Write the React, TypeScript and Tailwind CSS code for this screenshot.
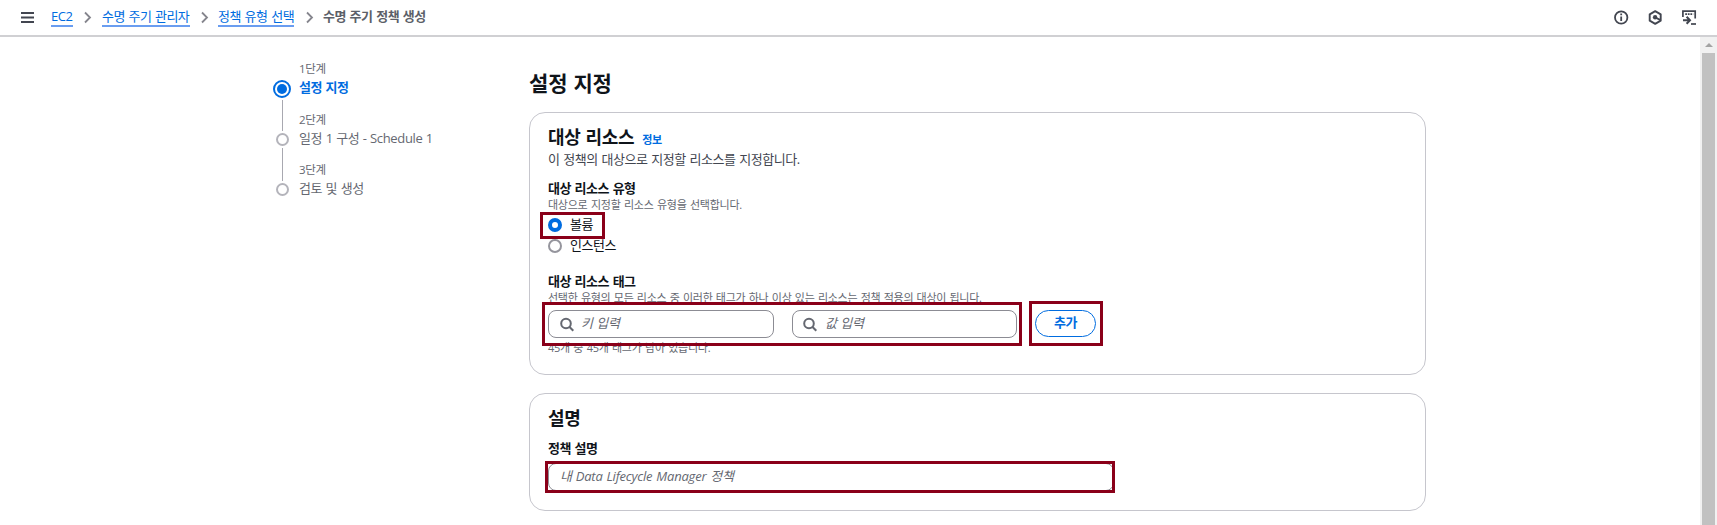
import type { ReactNode } from "react";

const Chevron = () => (
  <svg className="h-[13px] w-[9px] shrink-0" viewBox="0 0 9 13" fill="none" stroke="#85858d" strokeWidth="1.8">
    <path d="M1 1.5L6 6.5L1 11.5" />
  </svg>
);

const SearchIcon = () => (
  <svg className="h-[15px] w-[15px] shrink-0" viewBox="0 0 15 15" fill="none" stroke="#656871" strokeWidth="2">
    <circle cx="6" cy="6.5" r="4.8" />
    <path d="M9.3 9.8L13.3 13.8" />
  </svg>
);

const Crumb = ({ children, w }: { children: ReactNode; w: string }) => (
  <a className={`${w} h-[19px] shrink-0 border-b-2 border-[#6a9df0] text-[13px] leading-[16px] whitespace-nowrap text-[#006ce0]`}>
    {children}
  </a>
);

const Mark = ({ pos }: { pos: string }) => (
  <div className={`pointer-events-none absolute z-10 border-3 border-[#8a0019] ${pos}`} />
);

const Step = ({ n, label, last, style }: { n: string; label: string; last?: boolean; style: string }) => (
  <li className={`flex h-[50px] gap-[7px] ${style}`}>
    <div className="flex w-5 shrink-0 flex-col items-center">
      <div className="mt-[21px] h-[13px] w-[13px] shrink-0 rounded-full border-2 border-[#b4b4bb]" />
      {!last && <div className="mt-[2px] -mb-[19px] w-px grow bg-[#a8a8b0]" />}
    </div>
    <div className="whitespace-nowrap text-[#656871]">
      <div className="h-[17px] text-[11.5px] leading-[16px] tracking-[-0.35px]">{n}</div>
      <div className="text-[13px] leading-[19px]">{label}</div>
    </div>
  </li>
);

export default function App() {
  return (
    <div className="relative flex h-[525px] w-[1717px] flex-col overflow-hidden bg-white font-['Open_Sans','Noto_Sans_CJK_KR',sans-serif] text-[13px] text-[#0f141a]">
      <header className="flex h-[37px] shrink-0 items-center border-b-2 border-[#d0d0d3] pl-[21px]">
        <svg className="mr-[17px] h-[11px] w-[13px] shrink-0" viewBox="0 0 13 11" fill="none" stroke="#424650" strokeWidth="1.9">
          <path d="M0 1H13M0 5.5H13M0 10H13" />
        </svg>
        <nav className="flex items-center">
          <Crumb w="w-[22px] tracking-[-0.4px]">EC2</Crumb>
          <span className="ml-[11px] mr-[9px]"><Chevron /></span>
          <Crumb w="w-[88px] tracking-[-0.53px] [word-spacing:0.8px]">수명 주기 관리자</Crumb>
          <span className="ml-[11px] mr-[8px]"><Chevron /></span>
          <Crumb w="w-[76px] tracking-[-0.5px] [word-spacing:0.8px]">정책 유형 선택</Crumb>
          <span className="ml-[12px] mr-[8px]"><Chevron /></span>
          <span className="-mt-[3px] text-[13px] font-bold leading-[17px] tracking-[-0.5px] text-[#5c5f68] [word-spacing:0.8px]">수명 주기 정책 생성</span>
        </nav>
        <div className="ml-auto mr-[20px] flex items-center gap-[19px]">
          <svg className="h-[15px] w-[15px]" viewBox="0 0 15 15" fill="none" stroke="#424650" strokeWidth="1.8">
            <circle cx="7.2" cy="7.5" r="6.2" />
            <path d="M7.2 6.5V11M7.2 3.6V5.3" />
          </svg>
          <svg className="h-[15px] w-[15px]" viewBox="0 0 15 15" fill="none" stroke="#424650" strokeWidth="1.9">
            <path d="M7.2 1.2L12.7 4.3V10.7L7.2 13.8L1.7 10.7V4.3Z" strokeLinejoin="round" />
            <circle cx="7.1" cy="7.3" r="2.2" fill="#424650" stroke="none" />
            <path d="M7.2 7.5L12.2 9.8" />
          </svg>
          <svg className="h-[15px] w-[15px]" viewBox="0 0 15 15" fill="none" stroke="#424650" strokeWidth="1.7">
            <path d="M0.9 7V1.2H13.2V8.5" />
            <path d="M3.2 4.2H11.2" strokeWidth="1.7" strokeDasharray="1.8 0.8" />
            <path d="M1 10.3H7.5M4.6 6.8L8 10.3L4.6 13.8" strokeWidth="2" />
            <path d="M9 14H14" />
          </svg>
        </div>
      </header>

      <div className="flex min-h-0 grow">
        <aside className="w-[529px] shrink-0 pl-[272px] pt-[24px]">
          <ol>
            <li className="flex h-[51px] gap-[7px]">
              <div className="flex w-5 shrink-0 flex-col items-center">
                <div className="mt-[19px] flex h-[18px] w-[18px] shrink-0 items-center justify-center rounded-full border-2 border-[#006ce0]">
                  <div className="h-[10px] w-[10px] rounded-full bg-[#006ce0]" />
                </div>
                <div className="mt-[2px] -mb-[19px] w-px grow bg-[#a8a8b0]" />
              </div>
              <div className="whitespace-nowrap text-[#656871]">
                <div className="h-[17px] text-[11.5px] leading-[16px] tracking-[-0.35px]">1단계</div>
                <div className="text-[13px] font-bold leading-[18px] tracking-[-0.5px] text-[#006ce0] [word-spacing:0.8px]">설정 지정</div>
              </div>
            </li>
            <Step n="2단계" label="일정 1 구성 - Schedule 1" style="tracking-[-0.35px] [word-spacing:0.4px]" />
            <Step n="3단계" label="검토 및 생성" last style="tracking-[-0.5px] [word-spacing:0.8px]" />
          </ol>
        </aside>

        <main className="w-[897px] shrink-0 whitespace-nowrap [word-spacing:0.8px]">
          <h1 className="h-[75px] pt-[31px] text-[21px] font-bold leading-[30px] tracking-[-0.15px]">설정 지정</h1>

          <section className="h-[263px] rounded-[16px] border border-[#c6c6cd] pl-[18px] pt-[12px]">
            <div className="flex h-[24px] items-baseline gap-[8px]">
              <h2 className="text-[18px] font-bold leading-[24px] tracking-[-0.35px]">대상 리소스</h2>
              <a className="text-[11px] font-bold leading-[16px] tracking-[-0.3px] text-[#006ce0]">정보</a>
            </div>
            <p className="h-[29px] text-[13px] leading-[20px] tracking-[-0.45px] text-[#424650]">이 정책의 대상으로 지정할 리소스를 지정합니다.</p>
            <div className="mt-px h-[18px] text-[13px] font-bold leading-[18px] tracking-[-0.5px]">대상 리소스 유형</div>
            <div className="h-[17px] text-[11px] leading-[15px] tracking-[-0.25px] text-[#656871]">대상으로 지정할 리소스 유형을 선택합니다.</div>
            <label className="flex h-[21px] items-center gap-[8px] leading-[20px] tracking-[-0.4px]">
              <span className="h-[14px] w-[14px] rounded-full border-4 border-[#006ce0]" /><span className="-mt-[2px]">볼륨</span>
            </label>
            <label className="flex h-[21px] items-center gap-[8px] leading-[20px] tracking-[-0.5px]">
              <span className="h-[14px] w-[14px] rounded-full border-2 border-[#95959d]" /><span className="-mt-px">인스턴스</span>
            </label>
            <div className="mt-[17px] h-[17px] text-[13px] font-bold leading-[17px] tracking-[-0.5px]">대상 리소스 태그</div>
            <div className="h-[20px] text-[11px] leading-[16px] tracking-[-0.28px] text-[#656871]">선택한 유형의 모든 리소스 중 이러한 태그가 하나 이상 있는 리소스는 정책 적용의 대상이 됩니다.</div>
            <div className="flex">
              <div className="flex h-[28px] w-[226px] items-center gap-[6px] rounded-[8px] border border-[#8c8c94] pl-[11px] italic tracking-[-0.4px] text-[#656871]">
                <SearchIcon /><span className="-mt-px">키 입력</span>
              </div>
              <div className="ml-[18px] flex h-[28px] w-[225px] items-center gap-[7px] rounded-[8px] border border-[#8c8c94] pl-[10px] italic tracking-[-0.4px] text-[#656871]">
                <SearchIcon /><span className="-mt-px">값 입력</span>
              </div>
              <button className="ml-[18px] h-[27px] w-[61px] rounded-full border border-[#006ce0] pb-[4px] text-[13px] font-bold leading-[20px] tracking-[-0.5px] text-[#006ce0]">추가</button>
            </div>
            <div className="mt-[2px] text-[11px] leading-[15px] tracking-[-0.25px] text-[#656871]">45개 중 45개 태그가 남아 있습니다.</div>
          </section>

          <section className="mt-[18px] h-[118px] rounded-[16px] border border-[#c6c6cd] pl-[18px] pt-[12px]">
            <h2 className="h-[34px] text-[18px] font-bold leading-[24px] tracking-[-0.25px]">설명</h2>
            <div className="h-[23px] text-[13px] font-bold leading-[17px] tracking-[-0.5px]">정책 설명</div>
            <div className="flex h-[28px] w-[566px] items-center rounded-[8px] border border-[#8c8c94] pb-[2px] pl-[11px] italic leading-[20px] tracking-[-0.2px] text-[#656871]">내 Data Lifecycle Manager 정책</div>
          </section>
        </main>

        <div className="ml-auto flex w-[17px] flex-col items-center bg-[#f1f1f1]">
          <svg className="mt-[6px] h-[4px] w-[8px] shrink-0" viewBox="0 0 8 4"><path d="M0 4L4 0L8 4Z" fill="#a3a3a3" /></svg>
          <div className="mt-[6px] w-[13px] grow bg-[#c1c1c1]" />
        </div>
      </div>

      <Mark pos="left-[540px] top-[212px] h-[27px] w-[65px]" />
      <Mark pos="left-[542px] top-[302px] h-[44px] w-[480px]" />
      <Mark pos="left-[1029px] top-[301px] h-[45px] w-[74px]" />
      <Mark pos="left-[545px] top-[461px] h-[32px] w-[570px]" />
    </div>
  );
}
